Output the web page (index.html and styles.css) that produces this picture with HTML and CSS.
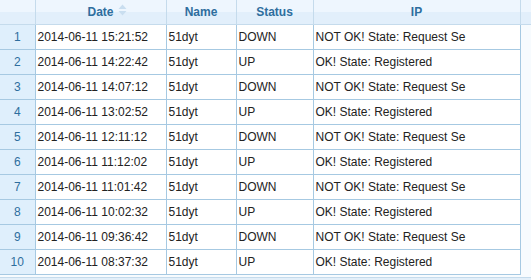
FILE: index.html
```html
<!DOCTYPE html>
<html>
<head>
<meta charset="utf-8">
<link rel="stylesheet" href="styles.css">
</head>
<body>
<div class="grid">
  <div class="hdiv">
    <table class="htable">
      <colgroup><col class="c0"><col class="c1"><col class="c2"><col class="c3"><col class="c4"></colgroup>
      <tr>
        <th></th>
        <th><span class="hlabel">Date<svg class="sort" width="9" height="12" viewBox="0 0 9 12"><path d="M4.5 0.5 L8.5 5 L0.5 5 Z" fill="#c9def0"/><path d="M0.5 7 L8.5 7 L4.5 11.5 Z" fill="#c9def0"/></svg></span></th>
        <th>Name</th>
        <th>Status</th>
        <th>IP</th>
      </tr>
    </table>
  </div>
  <div class="bdiv">
    <table class="btable">
      <colgroup><col class="c0"><col class="c1"><col class="c2"><col class="c3"><col class="c4"></colgroup>
      <tr><td class="rn">1</td><td>2014-06-11 15:21:52</td><td>51dyt</td><td>DOWN</td><td>NOT OK! State: Request Se</td></tr>
      <tr><td class="rn">2</td><td>2014-06-11 14:22:42</td><td>51dyt</td><td>UP</td><td>OK! State: Registered</td></tr>
      <tr><td class="rn">3</td><td>2014-06-11 14:07:12</td><td>51dyt</td><td>DOWN</td><td>NOT OK! State: Request Se</td></tr>
      <tr><td class="rn">4</td><td>2014-06-11 13:02:52</td><td>51dyt</td><td>UP</td><td>OK! State: Registered</td></tr>
      <tr><td class="rn">5</td><td>2014-06-11 12:11:12</td><td>51dyt</td><td>DOWN</td><td>NOT OK! State: Request Se</td></tr>
      <tr><td class="rn">6</td><td>2014-06-11 11:12:02</td><td>51dyt</td><td>UP</td><td>OK! State: Registered</td></tr>
      <tr><td class="rn">7</td><td>2014-06-11 11:01:42</td><td>51dyt</td><td>DOWN</td><td>NOT OK! State: Request Se</td></tr>
      <tr><td class="rn">8</td><td>2014-06-11 10:02:32</td><td>51dyt</td><td>UP</td><td>OK! State: Registered</td></tr>
      <tr><td class="rn">9</td><td>2014-06-11 09:36:42</td><td>51dyt</td><td>DOWN</td><td>NOT OK! State: Request Se</td></tr>
      <tr><td class="rn">10</td><td>2014-06-11 08:37:32</td><td>51dyt</td><td>UP</td><td>OK! State: Registered</td></tr>
    </table>
    <div class="foot"></div>
  </div>
</div>
</body>
</html>
```
FILE: styles.css
```css
html, body { margin: 0; padding: 0; background: #ffffff; }
body { font-family: "Liberation Sans", Arial, sans-serif; width: 531px; height: 280px; overflow: hidden; }
.grid { width: 531px; }
.hdiv {
  background: linear-gradient(#eef6fe 0, #eef6fe 12px, #e2effb 12px, #e2effb 100%);
  border-bottom: 1px solid #c5dbec;
  height: 24px;
}
.bdiv { background: #f7fbfe; }
table { border-collapse: collapse; table-layout: fixed; width: 520px; }
.c0 { width: 35px; }
.c1 { width: 131px; }
.c2 { width: 70px; }
.c3 { width: 77px; }
.c4 { width: 207px; }
th {
  height: 24px; padding: 0; border-right: 1px solid #c5dbec;
  font-size: 12px; font-weight: bold; color: #2e6e9e; text-align: center;
  white-space: nowrap; overflow: hidden;
}
.hlabel { position: relative; }
.sort { position: absolute; left: 31px; top: -1px; }
td {
  height: 24px; padding: 0 2px; border-right: 1px solid #a6c9e2; border-bottom: 1px solid #a6c9e2;
  font-size: 12px; color: #222222; background: #ffffff;
  white-space: nowrap; overflow: hidden;
}
td.rn { background: #dfeffc; color: #2e6e9e; text-align: center; padding: 0; }
.foot { height: 2px; }
.foot::after { content: ""; display: block; height: 3px; margin-top: 2px; background: #e3eff9; border-top: 1px solid #c5dbec; }
```
